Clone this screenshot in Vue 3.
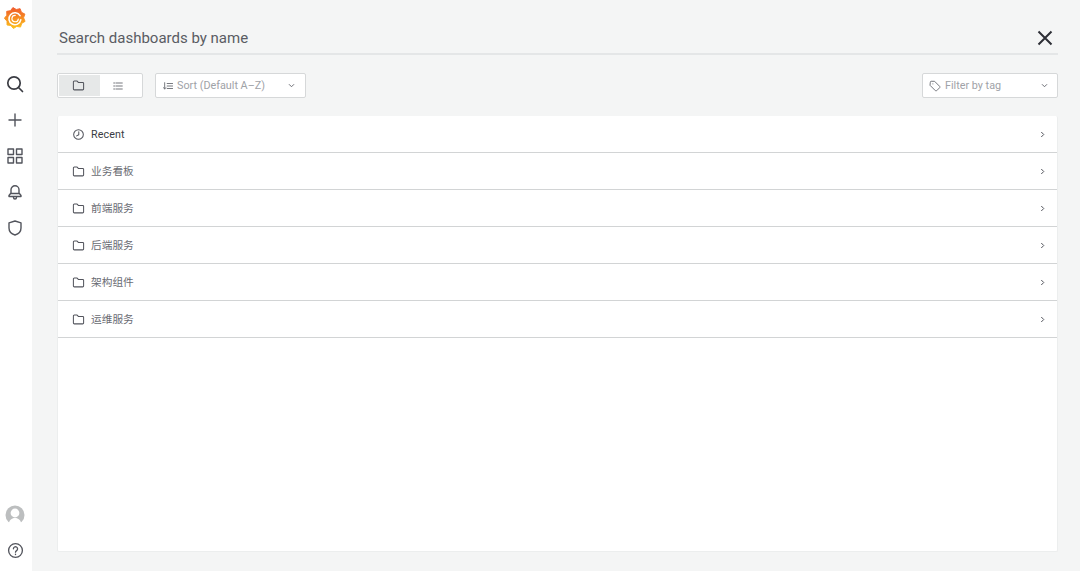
<script setup>
const rows = [
  { name: 'Recent', icon: 'clock' },
  { name: '业务看板', icon: 'folder' },
  { name: '前端服务', icon: 'folder' },
  { name: '后端服务', icon: 'folder' },
  { name: '架构组件', icon: 'folder' },
  { name: '运维服务', icon: 'folder' },
]
const teeth = 9
const gear = Array.from({ length: teeth * 2 }, (_, i) => {
  const a = (i * Math.PI) / teeth - Math.PI / 2 - 0.2
  const r = i % 2 ? 9.4 : 11.6
  return `${(12 + r * Math.cos(a)).toFixed(2)},${(12 + r * Math.sin(a)).toFixed(2)}`
}).join(' ')
</script>

<template>
  <div class="page">
    <aside class="side">
      <svg class="logo" viewBox="0 0 24 24" width="22" height="22">
        <defs>
          <linearGradient id="g" x1="0" y1="1" x2="0" y2="0">
            <stop offset="0" stop-color="#fcc21b" />
            <stop offset="1" stop-color="#f0592b" />
          </linearGradient>
        </defs>
        <polygon :points="gear" fill="url(#g)" stroke="url(#g)" stroke-width="1" stroke-linejoin="round" />
        <path d="M17.500 9.500A6.500 6.500 0 1 0 18.300 14" fill="none" stroke="#fff" stroke-width="1.700" stroke-linecap="round" />
        <path d="M15.600 13.200a3.500 3.500 0 1 1-3.300-4.100" fill="none" stroke="#fff" stroke-width="1.300" stroke-linecap="round" />
      </svg>
      <nav class="nav-top">
        <svg class="ico strong" viewBox="0 0 18 18" width="18" height="18"><circle cx="8" cy="8" r="6.200" /><path d="M12.500 12.500l4 4" /></svg>
        <svg class="ico" viewBox="0 0 18 18" width="18" height="18"><path d="M9 3v12M3 9h12" /></svg>
        <svg class="ico" viewBox="0 0 18 18" width="18" height="18"><rect x="2" y="2" width="5.500" height="5.500" /><rect x="10.500" y="2" width="5.500" height="5.500" /><rect x="2" y="10.500" width="5.500" height="5.500" /><rect x="10.500" y="10.500" width="5.500" height="5.500" /></svg>
        <svg class="ico" viewBox="0 0 18 18" width="18" height="18"><path d="M9 2.800A4 4 0 0 0 5 6.800V10l-2 2.500v1h12v-1L13 10V6.800a4 4 0 0 0-4-4zM5.500 10.500h7M7.500 13.500v1a1.500 1.500 0 0 0 3 0v-1" /></svg>
        <svg class="ico" viewBox="0 0 18 18" width="18" height="18"><path d="M9 2l6 1.800v5.200c0 3.500-2.500 6-6 7-3.500-1-6-3.500-6-7V3.800z" /></svg>
      </nav>
      <div class="nav-bottom">
        <svg class="avatar" viewBox="0 0 20 20" width="20" height="20"><circle cx="10" cy="10" r="9.500" fill="#bcbebf" /><circle cx="10" cy="8" r="4.400" fill="#fff" /><path d="M3.500 20c.5-5 3-7 6.500-7s6 2 6.500 7z" fill="#fff" /></svg>
        <svg class="ico help" viewBox="0 0 18 18" width="17" height="17"><circle cx="9" cy="9" r="7.300" /><path d="M6.800 7.200a2.200 2.200 0 1 1 3.400 1.900c-.8.500-1.200.9-1.200 1.700" /><path d="M9 12.800v.4" /></svg>
      </div>
    </aside>

    <main class="main">
      <header class="search">
        <span class="search-text">Search dashboards by name</span>
        <svg class="close" viewBox="0 0 16 16" width="16" height="16"><path d="M1.500 1.500l13 13M14.500 1.500l-13 13" /></svg>
      </header>

      <div class="toolbar">
        <div class="toolbar-left">
          <div class="toggle">
            <span class="toggle-btn active">
              <svg class="small" viewBox="0 0 14 14" width="13" height="13"><path d="M1.500 3.200a1 1 0 0 1 1-1h3l1.300 1.500h4.700a1 1 0 0 1 1 1v6a1 1 0 0 1-1 1h-9a1 1 0 0 1-1-1z" /></svg>
            </span>
            <span class="toggle-btn second">
              <svg class="small light" viewBox="0 0 14 14" width="12" height="12"><path d="M2 3.500h1M4.500 3.500H12M2 7h1M4.500 7H12M2 10.500h1M4.500 10.500H12" /></svg>
            </span>
          </div>
          <div class="select sort">
            <span class="select-label">
              <svg class="small light sort-ico" viewBox="0 0 12 12" width="10" height="10"><path d="M2 2v7.500M.7 8l1.300 1.700L3.300 8M5 3h6.500M5 6h6.500M5 9h6.500" /></svg>
              Sort (Default A–Z)
            </span>
            <svg class="chev" viewBox="0 0 8 6" width="7" height="5"><path d="M1 1.500l3 3 3-3" /></svg>
          </div>
        </div>
        <div class="select tag">
          <span class="select-label tag-label">
            <svg class="small light" viewBox="0 0 14 14" width="12" height="12"><path d="M1.500 2.500a1 1 0 0 1 1-1h4l6 6a1 1 0 0 1 0 1.400l-3.600 3.600a1 1 0 0 1-1.400 0l-6-6z" /><path d="M4.500 4.500v.1" /></svg>
            Filter by tag
          </span>
          <svg class="chev" viewBox="0 0 8 6" width="7" height="5"><path d="M1 1.500l3 3 3-3" /></svg>
        </div>
      </div>

      <section class="list">
        <div v-for="r in rows" :key="r.name" class="row" :class="{ recent: r.icon === 'clock' }">
          <svg v-if="r.icon === 'clock'" class="small" viewBox="0 0 14 14" width="13" height="13"><circle cx="7" cy="7" r="5.200" /><path d="M7.300 4v3.200L5 8.500" /></svg>
          <svg v-else class="small" viewBox="0 0 14 14" width="13" height="13"><path d="M1.500 3.200a1 1 0 0 1 1-1h3l1.300 1.500h4.700a1 1 0 0 1 1 1v6a1 1 0 0 1-1 1h-9a1 1 0 0 1-1-1z" /></svg>
          <span class="row-name">{{ r.name }}</span>
          <svg class="row-chev" viewBox="0 0 6 8" width="5" height="7"><path d="M1.500 1l3 3-3 3" /></svg>
        </div>
      </section>
    </main>
  </div>
</template>

<style>
html, body { margin: 0; padding: 0; background: #f4f5f5; }
</style>

<style scoped>
.page {
  display: flex;
  width: 1080px;
  height: 571px;
  overflow: hidden;
  background: #f4f5f5;
  font-family: Roboto, "Noto Sans CJK SC", sans-serif;
}
.side {
  width: 32px;
  flex: none;
  background: #fff;
  display: flex;
  flex-direction: column;
  align-items: center;
  padding: 7px 0 12px;
  box-sizing: border-box;
}
.logo { margin-right: 2px; }
.nav-top {
  display: flex;
  flex-direction: column;
  align-items: center;
  gap: 18px;
  margin-top: 46px;
  margin-right: 2px;
}
.ico { fill: none; stroke: #52545c; stroke-width: 1.400; stroke-linejoin: round; stroke-linecap: round; display: block; }
.ico.strong { stroke: #3a3c43; stroke-width: 1.700; }
.nav-bottom {
  margin-top: auto;
  display: flex;
  flex-direction: column;
  align-items: center;
  gap: 17px;
  margin-right: 2px;
}
.avatar { display: block; }
.main {
  flex: 1;
  padding: 0 22px 19px 25px;
  min-width: 0;
  display: flex;
  flex-direction: column;
}
.search {
  height: 53px;
  display: flex;
  align-items: center;
  justify-content: space-between;
  border-bottom: 2px solid #e4e6e7;
  padding: 0 5px 0 2px;
}
.search-text { font-size: 15px; color: #5a5c63; margin-top: 23px; }
.close { fill: none; stroke: #2d2f36; stroke-width: 2; margin-top: 22px; }
.toolbar {
  display: flex;
  justify-content: space-between;
  margin-top: 18px;
}
.toolbar-left { display: flex; gap: 12px; }
.toggle {
  width: 86px;
  height: 25px;
  box-sizing: border-box;
  border: 1px solid #d6d8d9;
  border-radius: 2px;
  background: #fff;
  display: flex;
  padding: 1px;
}
.toggle-btn { flex: 1; display: flex; align-items: center; justify-content: center; }
.toggle-btn.active { background: #e6e8e8; flex: 0 0 41px; padding-right: 3px; box-sizing: border-box; }
.toggle-btn.second { padding-right: 6px; }
.small { fill: none; stroke: #52545c; stroke-width: 1.100; stroke-linecap: round; stroke-linejoin: round; flex: none; }
.small.light { stroke: #6c6e75; }
.select {
  height: 25px;
  box-sizing: border-box;
  border: 1px solid #d6d8d9;
  border-radius: 2px;
  background: #fff;
  display: flex;
  align-items: center;
  justify-content: space-between;
  padding: 0 9px 0 7px;
  font-size: 10.800px;
  color: #a0a2a7;
}
.sort { width: 151px; padding-right: 10px; }
.tag { width: 136px; padding-left: 6px; }
.select-label { display: flex; align-items: center; gap: 3px; }
.tag-label { gap: 4px; }
.sort-ico { margin-right: 1px; }
.chev { fill: none; stroke: #6c6e75; stroke-width: 1.200; }
.list {
  flex: 1;
  margin-top: 18px;
  background: #fff;
  border: 1px solid #eceeee;
  border-top: 0;
  border-radius: 2px;
}
.row {
  height: 36px;
  border-bottom: 1px solid #d2d4d5;
  display: flex;
  align-items: center;
  padding: 0 12px 0 14px;
  font-size: 10.700px;
  color: #6a6c73;
}
.row.recent { color: #3a3c43; letter-spacing: .1px; }
.row-name { margin: -1px 0 0 6px; flex: 1; }
.row.recent .row-name { margin-top: 0; }
.row-chev { fill: none; stroke: #52545c; stroke-width: 1.200; }
</style>
